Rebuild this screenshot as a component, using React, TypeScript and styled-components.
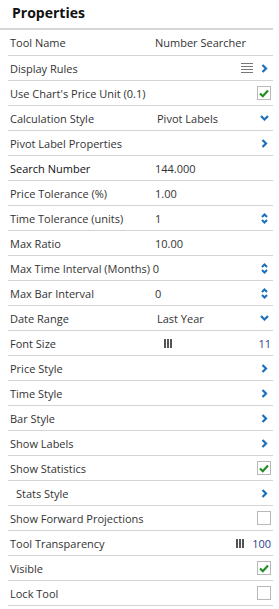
import React from 'react';
import styled, { createGlobalStyle } from 'styled-components';

const GlobalStyle = createGlobalStyle`
  body {
    margin: 0;
    background: #fff;
    font-family: "Open Sans", "Liberation Sans", sans-serif;
  }
`;

const Panel = styled.div`
  width: 273px;
  background: #fff;
`;

const Header = styled.div`
  height: 30px;
  display: flex;
  align-items: center;
  padding-left: 12px;
  padding-bottom: 4px;
  font-size: 14px;
  font-weight: 700;
  color: #111;
  border-bottom: 2px solid #d6d6d6;
  box-sizing: border-box;
`;

const Row = styled.div<{ $first?: boolean }>`
  margin-left: 8px;
  height: ${(p) => (p.$first ? 25 : 24)}px;
  border-bottom: 1px solid #d4d4d4;
  display: grid;
  grid-template-columns: 147px 1fr auto;
  align-items: center;
  font-size: 11px;
  color: #333;
`;

const Label = styled.div<{ $indent?: boolean; $strong?: boolean }>`
  padding-left: ${(p) => (p.$indent ? 8 : 2)}px;
  color: ${(p) => (p.$strong ? '#111' : '#333')};
  white-space: nowrap;
`;

const Value = styled.div<{ $shift?: number }>`
  padding-left: ${(p) => p.$shift ?? 0}px;
  white-space: nowrap;
`;

const Right = styled.div`
  display: flex;
  align-items: center;
  justify-content: flex-end;
  gap: 8px;
  padding-right: 2px;
`;

const Num = styled.span`
  color: #2b3f8c;
`;

const Box = styled.span`
  width: 12px;
  height: 12px;
  border: 1px solid #b8b8b8;
  background: #fff;
  display: flex;
  align-items: center;
  justify-content: center;
`;

const Blue = '#1c6fbd';

const ChevronRight = () => (
  <svg width="7" height="9" viewBox="0 0 7 9" style={{ marginRight: 3 }}>
    <polyline points="1.5,1 5,4.5 1.5,8" fill="none" stroke={Blue} strokeWidth="2.2" />
  </svg>
);

const ChevronDown = () => (
  <svg width="9" height="6" viewBox="0 0 9 6" style={{ marginRight: 2 }}>
    <polyline points="1,1 4.5,4.5 8,1" fill="none" stroke={Blue} strokeWidth="2.2" />
  </svg>
);

const Spinner = () => (
  <svg width="7" height="11" viewBox="0 0 7 11" style={{ marginRight: 3 }}>
    <polyline points="1,4 3.5,1.5 6,4" fill="none" stroke={Blue} strokeWidth="2" />
    <polyline points="1,7 3.5,9.5 6,7" fill="none" stroke={Blue} strokeWidth="2" />
  </svg>
);

const Lines = () => (
  <svg width="12" height="10" viewBox="0 0 12 10">
    {[0.5, 3.5, 6.5, 9.5].map((y) => (
      <line key={y} x1="0" x2="12" y1={y} y2={y} stroke="#777" strokeWidth="1" />
    ))}
  </svg>
);

const Bars = () => (
  <svg width="8" height="9" viewBox="0 0 8 9">
    {[0, 3, 6].map((x) => (
      <rect key={x} x={x} y="0" width="2" height="9" fill="#555" />
    ))}
  </svg>
);

const Check = ({ on }: { on?: boolean }) => (
  <Box>
    {on && (
      <svg width="10" height="9" viewBox="0 0 10 9">
        <polyline points="1,4.5 3.8,7.2 9,1.5" fill="none" stroke="#1f8f1f" strokeWidth="2.2" />
      </svg>
    )}
  </Box>
);

export default function App() {
  return (
    <Panel>
      <GlobalStyle />
      <Header>Properties</Header>
      <Row $first>
        <Label>Tool Name</Label>
        <Value>Number Searcher</Value>
        <Right />
      </Row>
      <Row>
        <Label>Display Rules</Label>
        <Value />
        <Right>
          <Lines />
          <ChevronRight />
        </Right>
      </Row>
      <Row>
        <Label>Use Chart's Price Unit (0.1)</Label>
        <Value />
        <Right>
          <Check on />
        </Right>
      </Row>
      <Row>
        <Label>Calculation Style</Label>
        <Value $shift={2}>Pivot Labels</Value>
        <Right>
          <ChevronDown />
        </Right>
      </Row>
      <Row>
        <Label>Pivot Label Properties</Label>
        <Value />
        <Right>
          <ChevronRight />
        </Right>
      </Row>
      <Row>
        <Label $strong>Search Number</Label>
        <Value>144.000</Value>
        <Right />
      </Row>
      <Row>
        <Label>Price Tolerance (%)</Label>
        <Value>1.00</Value>
        <Right />
      </Row>
      <Row>
        <Label>Time Tolerance (units)</Label>
        <Value>1</Value>
        <Right>
          <Spinner />
        </Right>
      </Row>
      <Row>
        <Label>Max Ratio</Label>
        <Value>10.00</Value>
        <Right />
      </Row>
      <Row>
        <Label>Max Time Interval (Months) 0</Label>
        <Value />
        <Right>
          <Spinner />
        </Right>
      </Row>
      <Row>
        <Label>Max Bar Interval</Label>
        <Value>0</Value>
        <Right>
          <Spinner />
        </Right>
      </Row>
      <Row>
        <Label>Date Range</Label>
        <Value $shift={2}>Last Year</Value>
        <Right>
          <ChevronDown />
        </Right>
      </Row>
      <Row>
        <Label>Font Size</Label>
        <Value $shift={9}>
          <Bars />
        </Value>
        <Right>
          <Num>11</Num>
        </Right>
      </Row>
      <Row>
        <Label>Price Style</Label>
        <Value />
        <Right>
          <ChevronRight />
        </Right>
      </Row>
      <Row>
        <Label>Time Style</Label>
        <Value />
        <Right>
          <ChevronRight />
        </Right>
      </Row>
      <Row>
        <Label>Bar Style</Label>
        <Value />
        <Right>
          <ChevronRight />
        </Right>
      </Row>
      <Row>
        <Label>Show Labels</Label>
        <Value />
        <Right>
          <ChevronRight />
        </Right>
      </Row>
      <Row>
        <Label>Show Statistics</Label>
        <Value />
        <Right>
          <Check on />
        </Right>
      </Row>
      <Row>
        <Label $indent>Stats Style</Label>
        <Value />
        <Right>
          <ChevronRight />
        </Right>
      </Row>
      <Row>
        <Label>Show Forward Projections</Label>
        <Value />
        <Right>
          <Check />
        </Right>
      </Row>
      <Row>
        <Label>Tool Transparency</Label>
        <Value />
        <Right>
          <Bars />
          <Num>100</Num>
        </Right>
      </Row>
      <Row>
        <Label>Visible</Label>
        <Value />
        <Right>
          <Check on />
        </Right>
      </Row>
      <Row>
        <Label>Lock Tool</Label>
        <Value />
        <Right>
          <Check />
        </Right>
      </Row>
    </Panel>
  );
}
